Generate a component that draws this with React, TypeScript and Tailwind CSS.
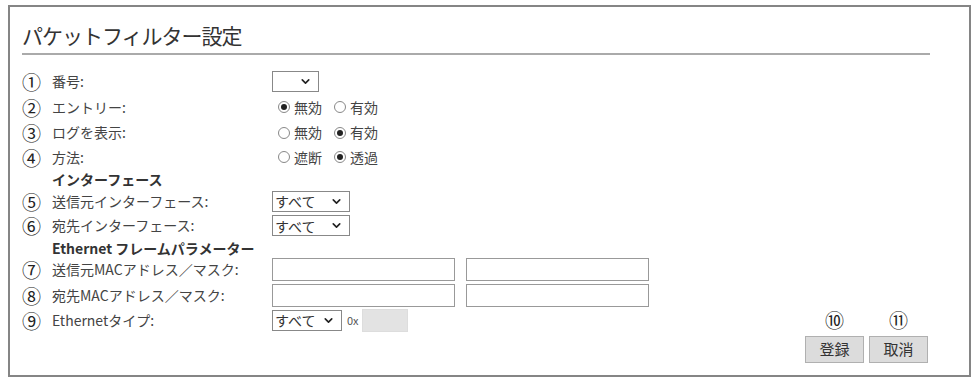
import React from 'react';
import { ChevronDown } from 'lucide-react';

const font = { fontFamily: '"Noto Sans CJK JP", "Noto Sans", sans-serif' };

const Num: React.FC<{ n: string }> = ({ n }) => (
  <span className="w-[26px] text-[19px] leading-none text-[#222] shrink-0">{n}</span>
);

const Radio: React.FC<{ label: string; checked?: boolean }> = ({ label, checked }) => (
  <span className="flex items-center gap-[4px] mr-[12px]">
    <span className="w-[12px] h-[12px] rounded-full border border-[#888] bg-white flex items-center justify-center">
      {checked && <span className="w-[6px] h-[6px] rounded-full bg-[#222]" />}
    </span>
    <span className="text-[14px] text-[#444]">{label}</span>
  </span>
);

const Select: React.FC<{ text?: string; width: string }> = ({ text, width }) => (
  <span className={`${width} h-[21px] border border-[#888] bg-white flex items-center justify-between pl-[2px] pr-[6px]`}>
    <span className="text-[14px] text-[#333] leading-none">{text}</span>
    <ChevronDown size={13} strokeWidth={3} className="text-[#222]" />
  </span>
);

const Input = () => <span className="w-[183px] h-[23px] border border-[#999] bg-white" />;

interface Row {
  num?: string;
  label: string;
  head?: boolean;
  h: string;
  control?: React.ReactNode;
}

const rows: Row[] = [
  { num: '①', label: '番号:', h: 'h-[25px]', control: <Select width="w-[47px]" /> },
  { num: '②', label: 'エントリー:', h: 'h-[26px]', control: <span className="flex ml-[6px]"><Radio label="無効" checked /><Radio label="有効" /></span> },
  { num: '③', label: 'ログを表示:', h: 'h-[25px]', control: <span className="flex ml-[6px]"><Radio label="無効" /><Radio label="有効" checked /></span> },
  { num: '④', label: '方法:', h: 'h-[24px]', control: <span className="flex ml-[6px]"><Radio label="遮断" /><Radio label="透過" checked /></span> },
  { label: 'インターフェース', head: true, h: 'h-[20px]' },
  { num: '⑤', label: '送信元インターフェース:', h: 'h-[24px]', control: <Select text="すべて" width="w-[78px]" /> },
  { num: '⑥', label: '宛先インターフェース:', h: 'h-[25px]', control: <Select text="すべて" width="w-[78px]" /> },
  { label: 'Ethernet フレームパラメーター', head: true, h: 'h-[19px]' },
  { num: '⑦', label: '送信元MACアドレス／マスク:', h: 'h-[25px]', control: <span className="flex gap-[11px]"><Input /><Input /></span> },
  { num: '⑧', label: '宛先MACアドレス／マスク:', h: 'h-[26px]', control: <span className="flex gap-[11px]"><Input /><Input /></span> },
  {
    num: '⑨', label: 'Ethernetタイプ:', h: 'h-[24px]',
    control: (
      <span className="flex items-center">
        <Select text="すべて" width="w-[70px]" />
        <span className="text-[11px] text-[#555] ml-[5px] mr-[3px]">0x</span>
        <span className="w-[46px] h-[23px] bg-[#e3e3e3] border border-[#ddd]" />
      </span>
    ),
  },
];

export default function App() {
  return (
    <div className="w-[976px] h-[379px] bg-white pt-[5px] pl-[8px]" style={font}>
      <div className="w-[963px] h-[372px] border-2 border-[#858585] pl-[12px] pr-[41px] pt-[12px]">
        <div className="w-[908px] border-b-2 border-[#aaa] pb-[2px]">
          <h1 className="text-[21px] leading-[32px] text-[#333] tracking-[-1px]">パケットフィルター設定</h1>
        </div>
        <div className="flex justify-between mt-[14px]">
          <div className="flex flex-col pb-[31px]">
            {rows.map((r, i) => (
              <div key={i} className={`flex items-center ${r.h}`}>
                <div className="w-[250px] flex items-center">
                  {r.num ? <Num n={r.num} /> : <span className="w-[30px]" />}
                  <span
                    className={
                      r.head
                        ? 'text-[14px] leading-[18px] font-bold text-[#333]'
                        : 'ml-[4px] text-[14px] text-[#444] whitespace-nowrap'
                    }
                  >
                    {r.label}
                  </span>
                </div>
                <div className="flex items-center">{r.control}</div>
              </div>
            ))}
          </div>
          <div className="flex flex-col items-end justify-end">
            <div className="flex gap-[5px]">
              {['⑩', '⑪'].map((n, i) => (
                <div key={n} className="flex flex-col items-center w-[59px]">
                  <span className="text-[19px] leading-[22px] text-[#222] mb-[5px]">{n}</span>
                  <button className="w-[59px] h-[27px] bg-[#dcdcdc] border border-[#b0b0b0] text-[15px] text-[#333]">
                    {i === 0 ? '登録' : '取消'}
                  </button>
                </div>
              ))}
            </div>
          </div>
        </div>
      </div>
    </div>
  );
}
